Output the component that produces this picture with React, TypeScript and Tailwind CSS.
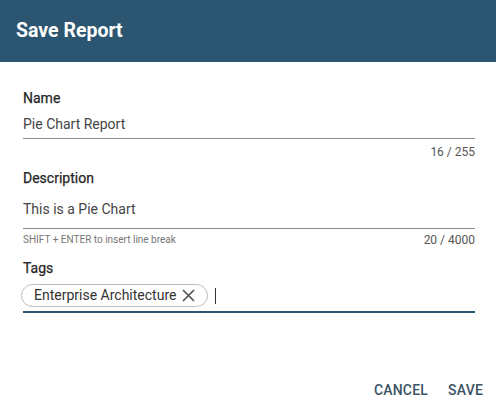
import React from "react";

export default function App() {
  return (
    <div className="w-[496px] h-[412px] bg-white flex flex-col" style={{ fontFamily: "Roboto, 'Liberation Sans', sans-serif" }}>
      <div className="h-[62px] bg-[#2b5570] flex items-center px-4">
        <h1 className="text-white text-[19.5px] font-bold">Save Report</h1>
      </div>

      <div className="flex flex-col pl-[23px] pr-[21px] pt-[27px]">
        <label className="text-[14px] text-[#262626] leading-[18px] [-webkit-text-stroke:0.25px_#262626]">Name</label>
        <div className="border-b border-[#8a8a8a] pt-[7px] pb-[4px] text-[14px] text-[#444] leading-[20px]">
          Pie Chart Report
        </div>
        <div className="flex justify-end text-[12px] text-[#555] leading-[14px] pt-[6px]">16 / 255</div>

        <label className="text-[14px] text-[#262626] leading-[18px] mt-[10px] [-webkit-text-stroke:0.25px_#262626]">Description</label>
        <div className="border-b border-[#8a8a8a] pt-[12px] pb-[9px] text-[14px] text-[#444] leading-[20px]">
          This is a Pie Chart
        </div>
        <div className="flex justify-between items-center pt-[4px]">
          <span className="text-[10px] text-[#777] leading-[14px]">SHIFT + ENTER to insert line break</span>
          <span className="text-[12px] text-[#555] leading-[14px]">20 / 4000</span>
        </div>

        <label className="text-[14px] text-[#262626] leading-[18px] mt-[12px] [-webkit-text-stroke:0.25px_#262626]">Tags</label>
        <div className="border-b-2 border-[#2b5570] flex items-center gap-[7px] pt-[7px] pb-[4px]">
          <span className="-ml-[2px] flex items-center gap-[5px] border border-[#bdbdbd] rounded-full h-[23px] pl-[12px] pr-[11px] text-[14px] text-[#333]">
            Enterprise Architecture
            <svg width="15" height="15" viewBox="0 0 15 15" className="text-[#555]">
              <path d="M2 2 L13 13 M13 2 L2 13" stroke="currentColor" strokeWidth="1.7" fill="none" />
            </svg>
          </span>
          <span className="w-px h-[16px] bg-[#333]" />
        </div>
      </div>

      <div className="mt-auto flex justify-end gap-[20px] pr-[13px] pb-[11px]">
        <button className="text-[14px] font-medium text-[#3d5467] tracking-[0.2px]">CANCEL</button>
        <button className="text-[14px] font-medium text-[#3d5467] tracking-[0.2px]">SAVE</button>
      </div>
    </div>
  );
}
